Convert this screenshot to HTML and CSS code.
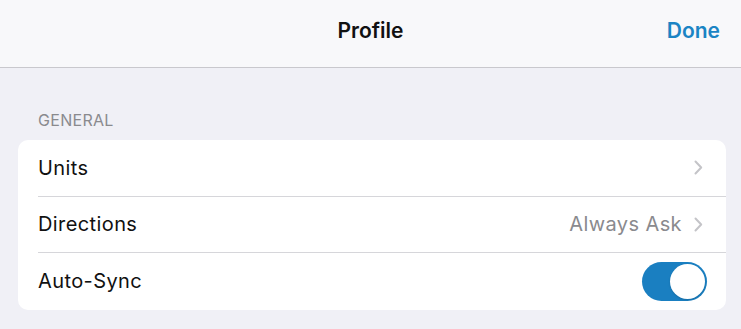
FILE: index.html
```html
<!DOCTYPE html>
<html>
<head>
<meta charset="utf-8">
<link rel="stylesheet" href="styles.css">
</head>
<body>
<header class="navbar">
  <div class="nav-side"></div>
  <div class="nav-title">Profile</div>
  <div class="nav-side nav-right"><span class="done">Done</span></div>
</header>
<main class="content">
  <div class="section-label">GENERAL</div>
  <div class="card">
    <div class="row">
      <span class="row-label">Units</span>
      <span class="row-right">
        <svg class="chev" width="9" height="15" viewBox="0 0 9 15"><path d="M1.5 1.5 L7.2 7.5 L1.5 13.5" fill="none" stroke="#c4c4c8" stroke-width="2" stroke-linecap="round" stroke-linejoin="round"/></svg>
      </span>
    </div>
    <div class="row">
      <span class="row-label">Directions</span>
      <span class="row-right">
        <span class="row-value">Always Ask</span>
        <svg class="chev" width="9" height="15" viewBox="0 0 9 15"><path d="M1.5 1.5 L7.2 7.5 L1.5 13.5" fill="none" stroke="#c4c4c8" stroke-width="2" stroke-linecap="round" stroke-linejoin="round"/></svg>
      </span>
    </div>
    <div class="row">
      <span class="row-label">Auto-Sync</span>
      <span class="row-right">
        <span class="toggle"><span class="knob"></span></span>
      </span>
    </div>
  </div>
</main>
</body>
</html>
```
FILE: styles.css
```css
* { box-sizing: border-box; }
html, body {
  margin: 0;
  padding: 0;
}
body {
  width: 741px;
  height: 329px;
  overflow: hidden;
  background: #f0f0f6;
  font-family: Inter, "Noto Sans", "Liberation Sans", sans-serif;
  color: #000;
}
.navbar {
  height: 68px;
  background: #f8f8fa;
  border-bottom: 1px solid #c9c8cd;
  display: flex;
  align-items: center;
  padding: 0 21px 6px 21px;
}
.nav-side { flex: 1; }
.nav-right { display: flex; justify-content: flex-end; }
.nav-title {
  font-size: 21px;
  font-weight: 600;
  color: #111;
}
.done {
  font-size: 21px;
  font-weight: 600;
  color: #1b84c4;
}
.content {
  padding: 42px 15px 0 18px;
}
.section-label {
  font-size: 16px;
  color: #8a8a8e;
  padding-left: 20px;
  height: 30px;
  letter-spacing: 0.3px;
}
.card {
  background: #fff;
  border-radius: 10px;
  overflow: hidden;
}
.row {
  height: 56.5px;
  display: flex;
  align-items: center;
  justify-content: space-between;
  margin-left: 20px;
  padding-right: 23px;
  border-bottom: 1px solid #d6d6da;
}
.row:last-child { border-bottom: none; }
.row-label {
  font-size: 20px;
  letter-spacing: 0.4px;
  color: #111;
}
.row-right {
  display: flex;
  align-items: center;
  gap: 12px;
}
.row-value {
  font-size: 20px;
  color: #8a8a8e;
  letter-spacing: 0.4px;
}
.chev { display: block; }
.toggle {
  width: 65px;
  height: 39px;
  border-radius: 20px;
  background: #1a7fc1;
  display: flex;
  align-items: center;
  justify-content: flex-end;
  padding: 2px;
  margin-right: -4px;
}
.knob {
  width: 35px;
  height: 35px;
  border-radius: 50%;
  background: #fff;
  box-shadow: 0 1px 2px rgba(0,0,0,0.15);
}
```
